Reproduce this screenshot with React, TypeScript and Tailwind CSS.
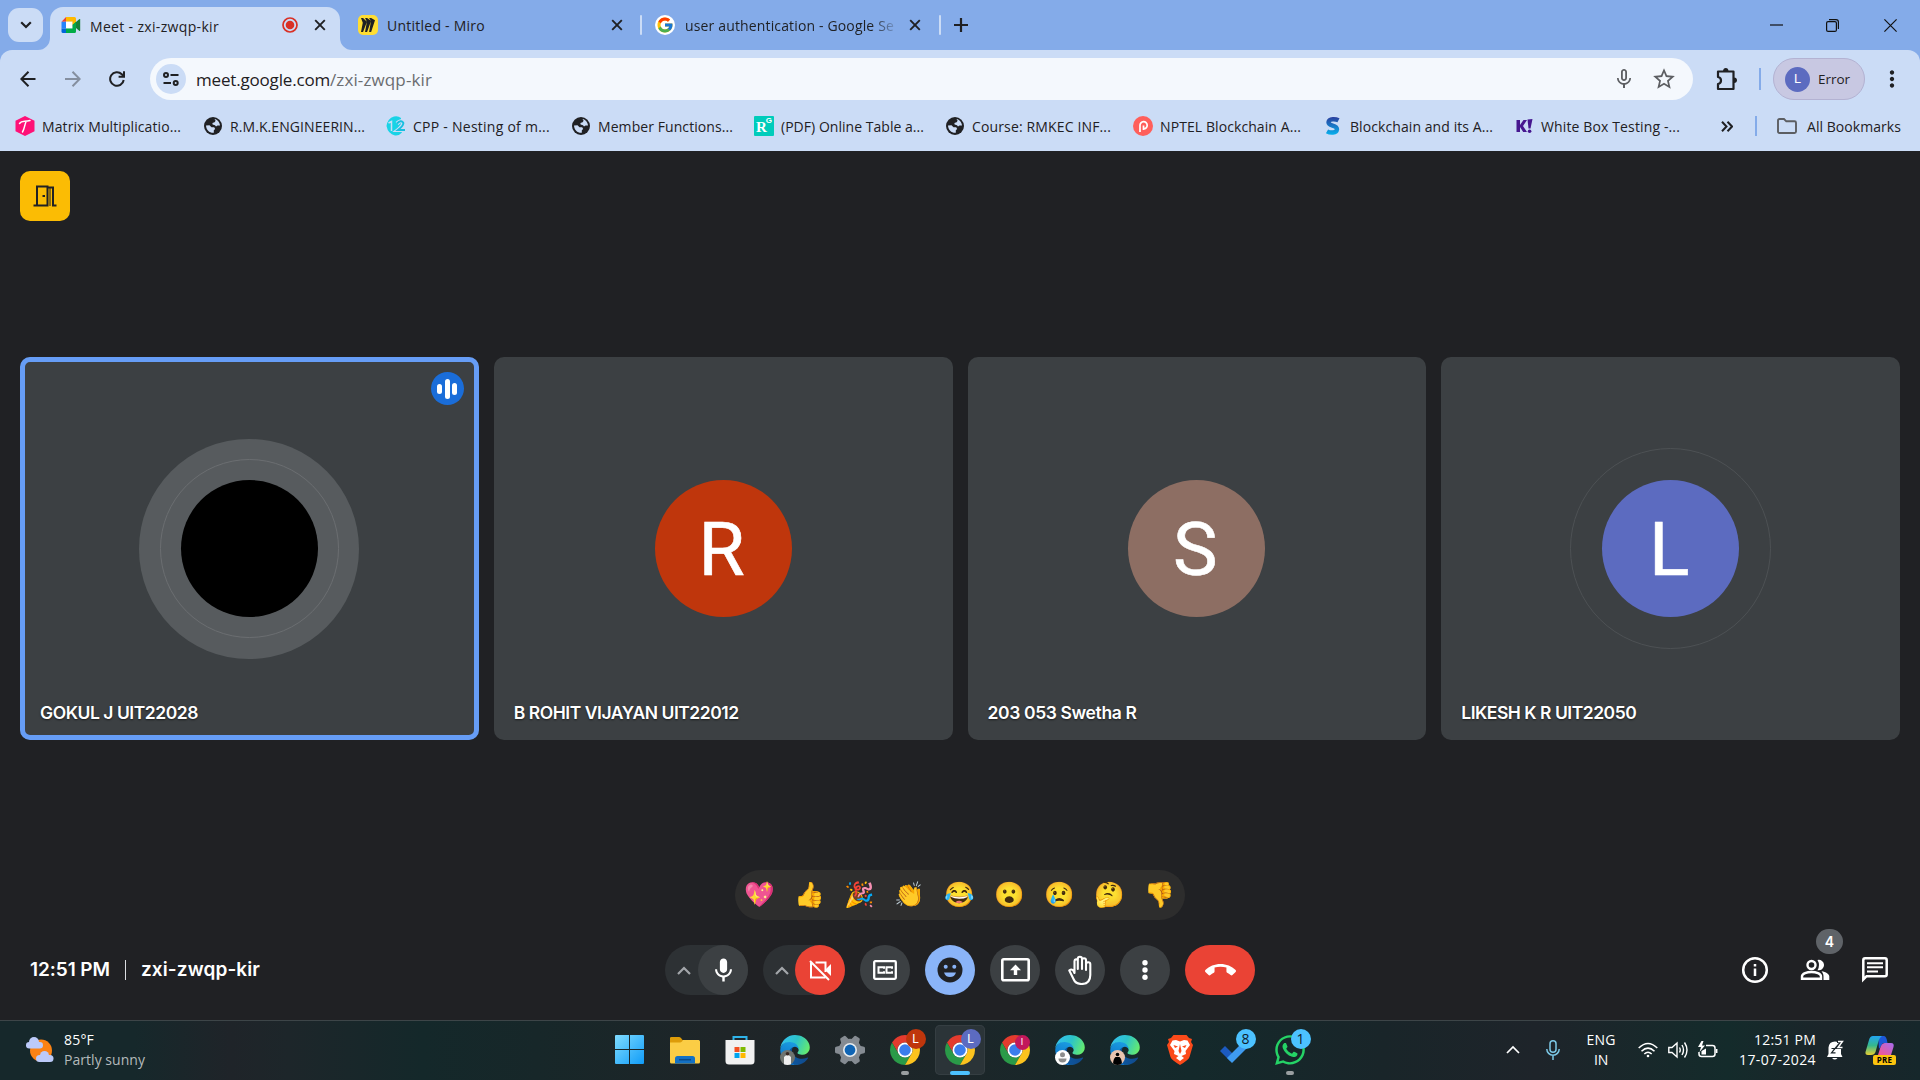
import React, { useLayoutEffect, useRef, useState } from 'react';
import { MdMic, MdMicNone, MdMoreVert, MdCallEnd, MdStarBorder } from 'react-icons/md';
import { FcGoogle } from 'react-icons/fc';
import { SiMiro } from 'react-icons/si';
import { FaWhatsapp } from 'react-icons/fa';

/* Text that spreads its tracking so that it fills a given width. */
function Fit({ w, className = '', children }: { w: number; className?: string; children: string }) {
  const ref = useRef<HTMLSpanElement>(null);
  const [ls, setLs] = useState(0);
  useLayoutEffect(() => {
    if (ref.current) setLs((w - ref.current.getBoundingClientRect().width) / children.length);
  }, [w, children]);
  return (
    <span ref={ref} className={'inline-block whitespace-nowrap ' + className} style={{ letterSpacing: ls }}>
      {children}
    </span>
  );
}

const Cross = ({ className = '' }: { className?: string }) => (
  <svg viewBox="0 0 12 12" className={'h-3 w-3 shrink-0 ' + className} fill="none" stroke="#1f2023" strokeWidth="1.9">
    <path d="M1.2 1.2 10.8 10.8M10.8 1.2 1.2 10.8" />
  </svg>
);

const MeetLogo = () => (
  <svg viewBox="0 0 20 16" className="h-4 w-5">
    <path d="M4.500 4.500H11.500V11.500H4.500Z" fill="#fff" />
    <path d="M.5 4.800 5 0V4.800Z" fill="#ea4335" />
    <path d="M5 0H13.500Q15 0 15 1.500V6L11.500 8V4.500H5Z" fill="#ffba00" />
    <path d="M.5 4.800H5V11.500H.5Z" fill="#2684fc" />
    <path d="M.5 11.500H5V16H2Q.5 16 .5 14.500Z" fill="#0066da" />
    <path d="M5 11.500H11.500V8L15 10.500V14.500Q15 16 13.500 16H5Z" fill="#00ac47" />
    <path d="M11.500 8 18.200 2.200Q19.200 1.600 19.200 2.600V13.400Q19.200 14.400 18.200 13.800Z" fill="#188038" />
    <path d="M11.500 8 15 5V11Z" fill="#00ac47" />
  </svg>
);

const Globe = () => (
  <svg viewBox="0 0 20 20" className="h-5 w-5">
    <circle cx="10" cy="10" r="9" fill="#202124" />
    <path d="M11.500 3.100C14.500 3.800 16.800 6.400 17 9.600L14.500 9.400 13 10.600 12 9.200 9.600 8.600 9.400 7 11.600 6.300 12.600 4.800Z" fill="#cbdcf6" />
    <path d="M3 9.500 6.500 9.300 8.500 11.300H11.200L12.200 13 10.800 14.200V16.800C6.700 17.200 3.200 14 3 9.500Z" fill="#cbdcf6" />
  </svg>
);

const Hexagon = () => (
  <svg viewBox="0 0 20 20" className="h-5 w-5">
    <path d="M10 0 19.500 4.800V15.200L10 20 .5 15.200V4.800Z" fill="#ff1177" />
    <path d="M4.500 7.500C6.500 4.500 9 6 15 4.600M11 5.700C9.500 9 9.500 13 7.500 16" stroke="#fff" strokeWidth="1.500" fill="none" strokeLinecap="round" />
  </svg>
);

const Twelve = () => (
  <svg viewBox="0 0 20 20" className="h-5 w-5">
    <path d="M8 .5Q12-.5 15 2V8L12 12 16 16.500Q13 20 9 19.500Q2 18 .5 10Q1.500 2.500 8 .5Z" fill="#19d3e6" />
    <path d="M2.500 7 5.500 5.500V15" stroke="#cbdcf6" strokeWidth="1.500" fill="none" />
    <path d="M11 7.500Q15 3.500 17.200 6.500Q18.300 9 12 14H19" stroke="#cbdcf6" strokeWidth="4" fill="none" />
    <path d="M11 7.500Q15 3.500 17.200 6.500Q18.300 9 12 14H19" stroke="#19bfe0" strokeWidth="2" fill="none" />
  </svg>
);

const Gate = () => (
  <span className="relative block h-5 w-5 rounded-[1px] bg-[#00ccbb] font-['Liberation_Serif',serif] font-bold leading-none text-white">
    <span className="absolute left-[2px] top-[4px] text-[15px]">R</span>
    <span className="absolute right-[2px] top-[1px] font-['Liberation_Sans',sans-serif] text-[8px]">G</span>
  </span>
);

const Prutor = () => (
  <svg viewBox="0 0 20 20" className="h-5 w-5">
    <circle cx="10" cy="10" r="10" fill="#ff5f5b" />
    <path d="M7 16V9.500a3.600 3.600 0 1 1 3.600 3.400M10.500 9.500V14" stroke="#fff" strokeWidth="1.700" fill="none" />
  </svg>
);

const SLetter = () => (
  <svg viewBox="0 0 20 20" className="h-5 w-5">
    <defs>
      <linearGradient id="sg" gradientUnits="userSpaceOnUse" x1="0" y1="1" x2="0" y2="19">
        <stop offset="0" stopColor="#2b3f9e" />
        <stop offset="1" stopColor="#06b2ee" />
      </linearGradient>
    </defs>
    <path d="M15.500 4.300C13 3 6 2 5.500 6.300 5.500 10.500 14 8.500 14 13.200 13.500 17.500 7 17 4 15.300" stroke="url(#sg)" strokeWidth="4.400" fill="none" />
  </svg>
);

const Kahoot = () => (
  <svg viewBox="0 0 20 20" className="h-5 w-5" fill="#46178f">
    <path d="M2.500 4H6V9L9.500 4H13L9 10 13 16H9.200L6 11V16H2.500Z" />
    <path d="M13.500 3.500 18.500 3 16.500 12.500H14.500Z" />
    <circle cx="15.600" cy="15.300" r="1.800" />
  </svg>
);

const bookmarks = [
  { icon: <Hexagon />, label: 'Matrix Multiplicatio...', w: 139, box: 'w-[188px]' },
  { icon: <Globe />, label: 'R.M.K.ENGINEERIN...', w: 135, box: 'w-[183px]' },
  { icon: <Twelve />, label: 'CPP - Nesting of m...', w: 137, box: 'w-[185px]' },
  { icon: <Globe />, label: 'Member Functions...', w: 135, box: 'w-[183px]' },
  { icon: <Gate />, label: '(PDF) Online Table a...', w: 143, box: 'w-[191px]' },
  { icon: <Globe />, label: 'Course: RMKEC INF...', w: 139, box: 'w-[188px]' },
  { icon: <Prutor />, label: 'NPTEL Blockchain A...', w: 141, box: 'w-[190px]' },
  { icon: <SLetter />, label: 'Blockchain and its A...', w: 143, box: 'w-[191px]' },
  { icon: <Kahoot />, label: 'White Box Testing -...', w: 139, box: 'w-[203px]' },
];

function TabStrip() {
  return (
    <div className="flex h-[50px] bg-[#84abe9] pl-2 text-[14px] text-[#1f2023]">
      <div className="mt-2 flex h-[34px] w-[35px] items-center justify-center rounded-[11px] bg-[#cbdcf6]">
        <svg viewBox="0 0 12 8" className="h-2 w-3" fill="none" stroke="#1f2023" strokeWidth="2.200"><path d="M1.200 1.200 6 6 10.800 1.200" /></svg>
      </div>
      <div className="relative ml-[7px] mt-[7px] flex h-[43px] w-[290px] items-center rounded-t-[13px] bg-[#cbdcf6] pb-[7px] pl-[11px]">
        <svg viewBox="0 0 12 12" className="absolute -left-3 bottom-0 h-3 w-3" fill="#cbdcf6"><path d="M12 0V12H0A12 12 0 0 0 12 0Z" /></svg>
        <svg viewBox="0 0 12 12" className="absolute -right-3 bottom-0 h-3 w-3" fill="#cbdcf6"><path d="M0 0V12H12A12 12 0 0 1 0 0Z" /></svg>
        <MeetLogo />
        <div className="ml-[9px] w-[192px] pt-[2px]"><Fit w={129}>Meet - zxi-zwqp-kir</Fit></div>
        <svg viewBox="0 0 16 16" className="h-4 w-4"><circle cx="8" cy="8" r="7" fill="none" stroke="#d93025" strokeWidth="1.700" /><circle cx="8" cy="8" r="4.300" fill="#d93025" /></svg>
        <Cross className="ml-4" />
      </div>
      <div className="ml-[18px] flex w-[284px] items-center">
        <span className="flex h-5 w-5 items-center justify-center rounded-[5px] bg-[#ffdd33]"><SiMiro className="h-[14px] w-[14px]" /></span>
        <div className="ml-[9px] w-[224px] pt-px"><Fit w={98}>Untitled - Miro</Fit></div>
        <Cross />
        <span className="ml-auto h-5 w-[2px] rounded bg-[#cbdcf6]" />
      </div>
      <div className="ml-[13px] flex w-[286px] items-center">
        <span className="flex h-5 w-5 items-center justify-center rounded-full bg-white"><FcGoogle className="h-[18px] w-[18px]" /></span>
        <div className="ml-[10px] w-[212px] whitespace-nowrap pt-px [mask-image:linear-gradient(to_right,#000_88%,rgba(0,0,0,0.15)_99%)]"><Fit w={209}>user authentication - Google Se</Fit></div>
        <Cross className="ml-[12px]" />
        <span className="ml-auto h-5 w-[2px] rounded bg-[#cbdcf6]" />
      </div>
      <div className="ml-[13px] flex items-center">
        <svg viewBox="0 0 14 14" className="h-[14px] w-[14px]" stroke="#1f2023" strokeWidth="2.200"><path d="M7 0V14M0 7H14" /></svg>
      </div>
      <div className="ml-auto flex items-center pr-[23px]">
        <svg viewBox="0 0 13 13" className="h-[13px] w-[13px]" stroke="#111" strokeWidth="1.200"><path d="M0 6H13" /></svg>
        <svg viewBox="0 0 13 13" className="ml-[43px] h-[13px] w-[13px]" stroke="#111" strokeWidth="1.200" fill="none"><rect x=".6" y="2.600" width="9.800" height="9.800" rx="1.500" /><path d="M3 .6H10Q12.400.6 12.400 3V10" /></svg>
        <svg viewBox="0 0 13 13" className="ml-[45px] h-[13px] w-[13px]" stroke="#111" strokeWidth="1.200"><path d="M.4.400 12.600 12.600M12.600.4.400 12.600" /></svg>
      </div>
    </div>
  );
}

function Toolbar() {
  return (
    <div className="bg-[#84abe9]">
      <div className="flex h-[101px] flex-col rounded-t-[12px] bg-[#cbdcf6] text-[#1f2023]">
        <div className="mt-2 flex h-[42px] items-center pl-5">
          <svg viewBox="0 0 16 16" className="h-4 w-4" fill="none" stroke="#1f2023" strokeWidth="2"><path d="M15.500 8H1.500M8.500.8 1.300 8 8.500 15.200" /></svg>
          <svg viewBox="0 0 16 16" className="ml-[29px] h-4 w-4" fill="none" stroke="#858f9f" strokeWidth="2"><path d="M0 8H14.500M7.500.8 14.700 8 7.500 15.200" /></svg>
          <svg viewBox="0 0 16 16" className="ml-[28px] h-4 w-4" fill="none" stroke="#1f2023" strokeWidth="2"><path d="M14.700 9A6.800 6.800 0 1 1 12.800 3.200L15 5.400M15 .3V5.700H9.600" /></svg>
          <div className="ml-[25px] flex h-[42px] w-[1543px] items-center rounded-full bg-[#f4f8fd] pl-[6px] pr-[16px]">
            <div className="flex h-[30px] w-[30px] items-center justify-center rounded-full bg-[#cbdcf6]">
              <svg viewBox="0 0 16 14" className="h-[14px] w-4" fill="none" stroke="#1f2023" strokeWidth="2"><circle cx="3" cy="3" r="2" /><path d="M7.500 3H15.500M.5 11H8" /><circle cx="12.700" cy="11" r="2" /></svg>
            </div>
            <span className="ml-[10px] flex pt-px text-[17px]"><Fit w={134}>meet.google.com</Fit><Fit w={102} className="text-[#6b6d70]">/zxi-zwqp-kir</Fit></span>
            <MdMicNone className="ml-auto h-[24px] w-[24px] text-[#5c5e62]" />
            <MdStarBorder className="ml-[15px] h-[26px] w-[26px] text-[#5c5e62]" />
          </div>
          <svg viewBox="0 0 24 26" className="ml-[22px] h-[26px] w-6" fill="none" stroke="#1f2023" strokeWidth="2.200" strokeLinejoin="round"><path d="M3 5.500H18.500V23H3V18Q6 17.500 6 14.500T3 11Z" /><path d="M8 5Q8.300 2 10.800 2T13.500 5ZM19 11.500Q22 11.800 22 14.200T19 17Z" fill="#1f2023" stroke="none" /></svg>
          <span className="ml-[20px] h-[22px] w-[2px] bg-[#84abe9]" />
          <div className="ml-[12px] flex h-[42px] w-[92px] items-center rounded-full border border-[#b3b2d2] bg-[#c8c8e2] pl-[11px] text-[13.500px]">
            <span className="flex h-[25px] w-[25px] items-center justify-center rounded-full bg-[#5c6bc0] font-['Roboto',sans-serif] text-[13px] text-white">L</span>
            <span className="ml-[8px]"><Fit w={32}>Error</Fit></span>
          </div>
          <MdMoreVert className="ml-[14px] h-[26px] w-[26px]" />
        </div>
        <div className="flex h-[50px] items-center pl-[15px] pt-[2px] text-[14px]">
          {bookmarks.map((b) => (
            <div key={b.label} className={'flex shrink-0 items-center ' + b.box}>
              {b.icon}
              <span className="ml-[7px]"><Fit w={b.w}>{b.label}</Fit></span>
            </div>
          ))}
          <svg viewBox="0 0 12 11" className="ml-[4px] h-[11px] w-3 shrink-0" fill="none" stroke="#1f2023" strokeWidth="2"><path d="M1 .8 5.500 5.500 1 10.200M6.500.8 11 5.500 6.500 10.200" /></svg>
          <span className="ml-[22px] h-5 w-[2px] shrink-0 bg-[#84abe9]" />
          <svg viewBox="0 0 20 16" className="ml-[20px] h-4 w-5 shrink-0" fill="none" stroke="#5c5e62" strokeWidth="1.900"><path d="M1 2.500Q1 1 2.500 1H7L9.300 3.300H17.500Q19 3.300 19 4.800V13.500Q19 15 17.500 15H2.500Q1 15 1 13.500Z" /></svg>
          <span className="ml-[10px]"><Fit w={94}>All Bookmarks</Fit></span>
        </div>
      </div>
    </div>
  );
}

type Person = { name: string; w: number; letter: string; color: string };
const people: Person[] = [
  { name: 'GOKUL J UIT22028', w: 158, letter: '', color: 'bg-black' },
  { name: 'B ROHIT VIJAYAN UIT22012', w: 225, letter: 'R', color: 'bg-[#bf360c]' },
  { name: '203 053 Swetha R', w: 149, letter: 'S', color: 'bg-[#8d6e63]' },
  { name: 'LIKESH K R UIT22050', w: 175, letter: 'L', color: 'bg-[#5c6bc0]' },
];

function Tile({ p, i }: { p: Person; i: number }) {
  return (
    <div className="relative flex h-[383px] items-center justify-center rounded-[10px] bg-[#3c4043]">
      {i === 0 && (
        <>
          <div className="absolute inset-0 rounded-[10px] border-[5px] border-[#669df6]" />
          <div className="absolute right-[15px] top-[15px] flex h-[33px] w-[33px] items-center justify-center gap-[2.500px] rounded-full bg-[#1a6dd9]">
            <span className="h-[10px] w-[5px] rounded-full bg-white" />
            <span className="h-[20px] w-[5px] rounded-full bg-white" />
            <span className="h-[12px] w-[5px] rounded-full bg-white" />
          </div>
          <div className="absolute h-[220px] w-[220px] rounded-full bg-[#575b5e]" />
          <div className="absolute h-[179px] w-[179px] rounded-full border border-[#6b6e71]" />
        </>
      )}
      {i === 3 && <div className="absolute h-[201px] w-[201px] rounded-full border border-[#4d5154]" />}
      <div className={"relative flex h-[137px] w-[137px] items-center justify-center rounded-full pr-[3px] pt-[2px] font-['Roboto',sans-serif] text-[75px] leading-none text-white [-webkit-text-stroke:0.6px_white] " + p.color}>{p.letter}</div>
      <div className="absolute bottom-[15px] left-5 font-['Inter',sans-serif] text-[17.500px] font-semibold leading-6 text-white [text-shadow:0_1px_2px_rgba(0,0,0,.6)]"><Fit w={p.w}>{p.name}</Fit></div>
    </div>
  );
}

const Round = ({ children, className = 'bg-[#3c4043]' }: { children: React.ReactNode; className?: string }) => (
  <div className={'flex h-[50px] w-[50px] shrink-0 items-center justify-center rounded-full text-white ' + className}>{children}</div>
);

const Up = () => (
  <svg viewBox="0 0 14 9" className="ml-[12px] h-[9px] w-[14px]" fill="none" stroke="#a3a6aa" strokeWidth="2.200"><path d="M1 8 7 2 13 8" /></svg>
);

function Controls() {
  return (
    <div className="flex gap-[15px]">
      <div className="flex w-[83px] items-center justify-between rounded-full bg-[#2d3134]"><Up /><Round><MdMic className="h-[29px] w-[29px]" /></Round></div>
      <div className="flex w-[82px] items-center justify-between rounded-full bg-[#2d3134]"><Up />
        <Round className="bg-[#ea4335]">
          <svg viewBox="0 0 24 24" className="h-6 w-6" fill="none" stroke="#fff" strokeWidth="2"><path d="M3 4.500V19.500H17.500M7.500 4.500H17.500V14" /><path d="M17.500 11.500 23 6V18L17.500 12.500Z" fill="#fff" stroke="none" /><path d="M2 3 21 22" /></svg>
        </Round>
      </div>
      <Round>
        <svg viewBox="0 0 24 20" className="h-5 w-6" fill="none" stroke="#fff" strokeWidth="2.300"><rect x="1.200" y="1.200" width="21.600" height="17.600" rx="1" /><path d="M11 8.700V7.300H5.500V12.700H11V11.300M19 8.700V7.300H13.500V12.700H19V11.300" strokeWidth="2" /></svg>
      </Round>
      <Round className="bg-[#8ab4f8]">
        <svg viewBox="0 0 26 26" className="h-[26px] w-[26px]"><circle cx="13" cy="13" r="12.500" fill="#202124" /><circle cx="8.700" cy="9.800" r="2" fill="#8ab4f8" /><circle cx="17.300" cy="9.800" r="2" fill="#8ab4f8" /><path d="M7 15.500H19Q17.500 20 13 20Q8.500 20 7 15.500Z" fill="#8ab4f8" /></svg>
      </Round>
      <Round>
        <svg viewBox="0 0 29 24" className="h-6 w-[29px]"><rect x="1.300" y="1.300" width="26.400" height="21" rx="1.500" fill="none" stroke="#fff" strokeWidth="2.600" /><path d="M14.500 6.500 20 12.200H16.200V17H12.800V12.200H9Z" fill="#fff" /></svg>
      </Round>
      <Round>
        <svg viewBox="0 0 24 30" className="h-[30px] w-6" fill="none" stroke="#fff" strokeWidth="2.100" strokeLinecap="round" strokeLinejoin="round"><path d="M9.800 14V3.800A2 2 0 0 1 14 3.800V14M14 5.300A2 2 0 0 1 18 5.300V15M18 9.300A2.100 2.100 0 0 1 22.300 9.500V20Q22.300 29 13.500 29Q7.500 29 5.500 24L1.300 15.500Q2.800 13.500 5.200 15.300L6.500 18V6A1.700 1.700 0 0 1 9.800 5.500" /></svg>
      </Round>
      <Round>
        <svg viewBox="0 0 6 20" className="h-5 w-[6px]" fill="#fff"><circle cx="3" cy="2.700" r="2.700" /><circle cx="3" cy="10" r="2.700" /><circle cx="3" cy="17.300" r="2.700" /></svg>
      </Round>
      <div className="flex h-[50px] w-[70px] items-center justify-center rounded-full bg-[#ea4335] text-white"><MdCallEnd className="h-[31px] w-[31px]" /></div>
    </div>
  );
}

const emojis = ['💖', '👍', '🎉', '👏', '😂', '😮', '😢', '🤔', '👎'];

function Meeting() {
  return (
    <div className="flex h-[869px] flex-col bg-[#202124]">
      <div className="ml-5 mt-5 flex h-[50px] w-[50px] items-center justify-center rounded-[10px] bg-[#fbbc04]">
        <svg viewBox="0 0 24 22" className="h-[22px] w-6" fill="none" stroke="#202124" strokeWidth="2"><path d="M.5 20.500H14.500V1.500H4V20.500M14.500 2.500H20V20.500H23.500" /><path d="M17 3V21" strokeWidth="1" /><rect x="9.500" y="10" width="2.500" height="2" fill="#202124" stroke="none" /></svg>
      </div>
      <div className="mt-[136px] grid grid-cols-4 gap-[15px] px-5">
        {people.map((p, i) => <Tile key={p.name} p={p} i={i} />)}
      </div>
      <div className="mt-[130px] flex h-[50px] w-[450px] items-center self-center rounded-full bg-[#2d2d2d]">
        {emojis.map((e) => <span key={e} className="w-[50px] text-center font-['Noto_Color_Emoji',sans-serif] text-[24.500px] leading-none">{e}</span>)}
      </div>
      <div className="mt-[25px] flex h-[50px] items-center justify-between">
        <div className="flex w-[665px] items-center pl-[30px] font-['Inter',sans-serif] text-[19px] font-semibold text-white">
          <Fit w={80}>12:51 PM</Fit>
          <span className="ml-[15px] mr-[15px] h-5 w-px bg-[#dadce0]" />
          <Fit w={119}>zxi-zwqp-kir</Fit>
        </div>
        <Controls />
        <div className="relative flex w-[665px] items-center justify-end gap-[30px] pr-[30px]">
          <svg viewBox="0 0 30 30" className="h-[30px] w-[30px]" fill="none" stroke="#fff" strokeWidth="2.500"><circle cx="15" cy="15" r="11.800" /><path d="M15 13.500V21M15 9V11.500" /></svg>
          <svg viewBox="0 0 30 30" className="h-[30px] w-[30px]" fill="#fff"><circle cx="11.500" cy="10" r="4" fill="none" stroke="#fff" strokeWidth="2.400" /><path d="M2 23.800V21.500C2 18.500 7 17 11.500 17S21 18.500 21 21.500V23.800Z" fill="none" stroke="#fff" strokeWidth="2.400" /><path d="M17.500 4.900A5.300 5.300 0 1 1 17.500 15.200Q20.500 10 17.500 4.900ZM21.500 16.200C26 17 29.300 18.800 29.300 21.500V25H23.500V21.500C23.500 19 22.500 17.500 21.500 16.200Z" /></svg>
          <svg viewBox="0 0 30 30" className="h-[30px] w-[30px]" fill="none" stroke="#fff" strokeWidth="2.500"><path d="M3.300 24.500V5Q3.300 3.300 5 3.300H25Q26.700 3.300 26.700 5V19.500Q26.700 21.200 25 21.200H6.600L3.300 24.500Z" /><path d="M7 8.300H23M7 12.300H23M7 16.400H18" strokeWidth="2" /></svg>
          <span className="absolute right-[77px] top-[-26px] flex h-[25px] w-[27px] items-center justify-center rounded-full bg-[#5f6368] font-['Inter',sans-serif] text-[14px] font-semibold text-white">4</span>
        </div>
      </div>
    </div>
  );
}

const Chrome = () => (
  <svg viewBox="2 2 44 44" className="h-[30px] w-[30px]">
    <path d="M43.050 13H24A11 11 0 0 0 14.470 29.500L4.950 13A22 22 0 0 1 43.050 13Z" fill="#e33b2e" />
    <path d="M4.950 13 14.470 29.500A11 11 0 0 0 33.530 29.500L24 46A22 22 0 0 1 4.950 13Z" fill="#2a9a48" />
    <path d="M24 46 33.530 29.500A11 11 0 0 0 24 13H43.050A22 22 0 0 1 24 46Z" fill="#fcc31e" />
    <circle cx="24" cy="24" r="11" fill="#fff" /><circle cx="24" cy="24" r="8.500" fill="#3b7ded" />
  </svg>
);

const Edge = ({ id }: { id: string }) => (
  <svg viewBox="0 0 256 260" className="h-[30px] w-[30px]">
    <defs>
      <linearGradient id={id + 'a'} x1="0" x2="1"><stop offset="0" stopColor="#0c59a4" /><stop offset="1" stopColor="#114a8b" /></linearGradient>
      <linearGradient id={id + 'b'} x1="0.600" x2="0.300" y1="0" y2="1"><stop offset="0" stopColor="#1b9de2" /><stop offset="1" stopColor="#0a6cc4" /></linearGradient>
      <linearGradient id={id + 'c'} x1="0" x2="1" y1="0.300" y2="0.600"><stop offset="0" stopColor="#35c1f1" /><stop offset="0.500" stopColor="#2cc3c9" /><stop offset="1" stopColor="#66eb6e" /></linearGradient>
    </defs>
    <path fill={`url(#${id}a)`} d="M235.680 195.460a93.730 93.730 0 0 1-10.540 4.710 101.870 101.870 0 0 1-35.900 6.460c-47.320 0-88.540-32.550-88.540-74.320A31.480 31.480 0 0 1 117.130 105c-42.800 1.800-53.800 46.400-53.800 72.530 0 73.880 68.090 81.370 82.760 81.370 7.910 0 19.840-2.300 27-4.560l1.310-.44a128.340 128.340 0 0 0 66.600-52.800 4 4 0 0 0-5.320-5.640z" />
    <path fill={`url(#${id}b)`} d="M105.730 246.420A79.200 79.200 0 0 1 83 225.080a80.720 80.720 0 0 1 29.530-120c3.120-1.470 8.450-4.130 15.540-4a32.350 32.350 0 0 1 25.690 13 31.880 31.880 0 0 1 6.360 18.660c0-.21 24.460-79.600-80-79.600-43.900 0-80 41.660-80 78.210a130.150 130.150 0 0 0 12.110 56 128 128 0 0 0 156.380 67.110 75.550 75.550 0 0 1-62.780-8z" />
    <path fill={`url(#${id}c)`} d="M152.330 148.860c-.81 1.050-3.300 2.500-3.300 5.660 0 2.610 1.700 5.120 4.720 7.230 14.380 10 41.490 8.680 41.560 8.680a59.560 59.560 0 0 0 30.270-8.350A61.380 61.380 0 0 0 256 109.200c.26-22.410-8-37.310-11.340-43.910C223.460 23.840 177.720 0 128 0A128 128 0 0 0 0 126.200c.48-36.540 36.800-66.050 80-66.050 3.500 0 23.460.34 42 10.070 16.340 8.580 24.900 18.940 30.850 29.210 6.180 10.670 7.280 24.150 7.280 29.520s-2.740 13.330-7.800 19.910z" />
  </svg>
);

const Gear = () => (
  <svg viewBox="0 0 30 30" className="h-[30px] w-[30px]">
    <g fill="#858b92">
      <circle cx="15" cy="15" r="11.300" />
      {[30, 90, 150, 210, 270, 330].map((a) => <path key={a} d="M10.500 6 11.800 1Q12 0 13.200 0H16.800Q18 0 18.200 1L19.500 6Z" transform={`rotate(${a} 15 15)`} />)}
    </g>
    <circle cx="15" cy="15" r="7" fill="#e8ecef" /><circle cx="15" cy="15" r="5.400" fill="#0f64b4" />
  </svg>
);

const Folder = () => (
  <svg viewBox="0 0 30 28" className="h-7 w-[30px]">
    <path d="M0 2Q0 1 1.500 1H9Q10 1 11 2L12.500 4H29V20H0Z" fill="#dd9c09" />
    <path d="M0 6.500H10Q11 6.500 12 5.500L13 4H28.500Q30 4 30 5.500V26Q30 27.500 28.500 27.500H1.500Q0 27.500 0 26Z" fill="#fbcd45" />
    <path d="M5 27.500V22.500Q5 20 7.500 20H22.500Q25 20 25 22.500V27.500Z" fill="#1471c4" /><path d="M9 23.700H21" stroke="#0a4a8a" strokeWidth="1.500" />
  </svg>
);

const Store = () => (
  <svg viewBox="0 0 30 30" className="h-[30px] w-[30px]">
    <path d="M8.500 6V2H21.500V6" fill="none" stroke="#2fb4ea" strokeWidth="2" />
    <path d="M.5 5H29.500V26Q29.500 29.500 26 29.500H4Q.5 29.500.5 26Z" fill="#f1f1f1" />
    <path d="M9.500 12H14.500V17H9.500Z" fill="#f25022" /><path d="M15.500 12H20.500V17H15.500Z" fill="#7fba00" /><path d="M9.500 18H14.500V23H9.500Z" fill="#00a4ef" /><path d="M15.500 18H20.500V23H15.500Z" fill="#ffb900" />
  </svg>
);

const Win = () => (
  <svg viewBox="0 0 29 29" className="h-[29px] w-[29px]">
    <defs><linearGradient id="wg" x1="0" y1="0" x2="1" y2="1"><stop offset="0" stopColor="#7fdcff" /><stop offset="1" stopColor="#109cf8" /></linearGradient></defs>
    <path d="M1 0H14V14H0V1Q0 0 1 0ZM15 0H28Q29 0 29 1V14H15ZM0 15H14V29H1Q0 29 0 28ZM15 15H29V28Q29 29 28 29H15Z" fill="url(#wg)" />
  </svg>
);

const Badge = ({ children, className }: { children: React.ReactNode; className: string }) => (
  <span className={'absolute flex items-center justify-center rounded-full leading-none ' + className}>{children}</span>
);

function DockItem({ children, on = false }: { children: React.ReactNode; on?: boolean }) {
  return (
    <div className="flex w-[55px] items-center justify-center">
      <div className={'relative flex h-[50px] w-[50px] items-center justify-center rounded-[5px] ' + (on ? 'bg-[#2b3438] ring-1 ring-inset ring-[#353e42]' : '')}>{children}</div>
    </div>
  );
}

function Taskbar() {
  return (
    <div className="flex h-[60px] items-center border-t border-[#3d4548] bg-[linear-gradient(90deg,#16282b_0%,#16282b_7%,#1f2429_12%,#1d262a_15%,#14282a_22%,#172729_28%,#1f2528_38%,#1c2629_50%,#14292b_62%,#192529_72%,#1e242a_80%,#142b2b_90%,#1b252a_95%,#16272b_100%)] pb-[2px] text-white">
      <div className="flex w-[602px] items-center pl-[26px]">
        <svg viewBox="0 0 28 28" className="h-7 w-7"><circle cx="15" cy="14.500" r="11" fill="#fb8214" /><g fill="#bccaf9"><circle cx="8" cy="6" r="5" /><rect y="6" width="17" height="6.500" rx="3.200" /><circle cx="18.500" cy="19.500" r="4.500" /><rect x="10" y="19" width="17.500" height="7" rx="3.500" /></g></svg>
        <div className="ml-[10px] text-[14px] leading-5"><div><Fit w={30}>85°F</Fit></div><div className="text-[#b4babb]"><Fit w={81}>Partly sunny</Fit></div></div>
      </div>
      <div className="flex">
        <DockItem><Win /></DockItem>
        <DockItem><Folder /></DockItem>
        <DockItem><Store /></DockItem>
        <DockItem><Edge id="e1" /><Badge className="bottom-[10px] left-[10px] h-[15px] w-[15px] overflow-hidden bg-[#6f7470]"><svg viewBox="0 0 15 15" className="h-full w-full"><path d="M4 15V7Q7.500 3 11 7V15Z" fill="#eee" /><circle cx="7.500" cy="3.800" r="1.800" fill="#3a2822" /></svg></Badge></DockItem>
        <DockItem><Gear /></DockItem>
        <DockItem><Chrome /><Badge className="right-[4px] top-[4px] h-5 w-5 bg-[#bf360c] font-['Roboto',sans-serif] text-[12px]">L</Badge><span className="absolute bottom-0 h-1 w-2 rounded-full bg-[#9a9fa1]" /></DockItem>
        <DockItem on><Chrome /><Badge className="right-[4px] top-[4px] h-5 w-5 bg-[#5c6bc0] font-['Roboto',sans-serif] text-[12px]">L</Badge><span className="absolute bottom-0 h-1 w-5 rounded-full bg-[#4cc2ff]" /></DockItem>
        <DockItem><Chrome /><Badge className="right-[10px] top-[10px] h-[15px] w-[15px] bg-[#c2185b] font-['Roboto',sans-serif] text-[9px]">I</Badge></DockItem>
        <DockItem><Edge id="e2" /><Badge className="bottom-[10px] left-[10px] h-[15px] w-[15px] bg-white"><svg viewBox="0 0 15 15" className="h-full w-full" fill="#8d8d8d"><circle cx="7.500" cy="4.800" r="2.500" /><path d="M3.500 8.500H11.500Q11.500 12.500 7.500 12.500T3.500 8.500Z" /></svg></Badge></DockItem>
        <DockItem><Edge id="e3" /><Badge className="bottom-[10px] left-[10px] h-[15px] w-[15px] overflow-hidden bg-[#e8c3ae]"><svg viewBox="0 0 15 15" className="h-full w-full"><circle cx="7.500" cy="4.500" r="1.800" /><path d="M3 15Q3 9 5.500 7H9.500Q12 9 12 15Z" /></svg></Badge></DockItem>
        <DockItem>
          <svg viewBox="0 0 26 30" className="h-[30px] w-[26px]"><path d="M6.500 0H19.500L22 3 25 4 24 7 26 10 22.500 22Q21.500 25 13 30Q4.500 25 3.500 22L0 10 2 7 1 4 4 3Z" fill="#fb4a1a" /><path d="M9 5 13 6.500 17 5 20.500 5.500 23 10 18.500 16 19 19 14.500 21 17 23 13 26 9 23 11.500 21 7 19 7.500 16 3 10 5.500 5.500Z" fill="#fff" /><path d="M13 9 14.500 16 13 19 11.500 16ZM6.500 10 11 11.500 8 13ZM19.500 10 15 11.500 18 13Z" fill="#fb4a1a" /></svg>
        </DockItem>
        <DockItem>
          <svg viewBox="0 0 30 24" className="absolute left-[10px] top-[14px] h-6 w-[30px]"><path d="M0 12 5 7 15 17 10 22Z" fill="#1c5ac0" /><path d="M7 19 23 3 28 8 12 24Z" fill="#3f9bf0" /></svg>
          <Badge className="right-[4px] top-[4px] h-5 w-5 bg-[#4cc2ff] text-[14px] text-[#10202a]">8</Badge>
        </DockItem>
        <DockItem><FaWhatsapp className="h-[34px] w-[34px] text-[#25d366]" /><Badge className="right-[4px] top-[4px] h-5 w-5 bg-[#4cc2ff] text-[14px] text-[#10202a]">1</Badge><span className="absolute bottom-0 h-1 w-2 rounded-full bg-[#9a9fa1]" /></DockItem>
      </div>
      <div className="ml-auto flex items-center pr-[24px] text-[14px] leading-5">
        <svg viewBox="0 0 14 9" className="h-[9px] w-[14px]" fill="none" stroke="#fff" strokeWidth="1.700"><path d="M1 8 7 2 13 8" /></svg>
        <svg viewBox="0 0 14 20" className="ml-[26px] h-5 w-[14px]" fill="none" stroke="#7cc8e6" strokeWidth="1.500"><rect x="4" y=".8" width="6" height="11.500" rx="3" /><path d="M.8 9A6.200 6.200 0 0 0 13.200 9M7 15.200V20" /></svg>
        <div className="ml-[26px] flex w-[30px] flex-col items-center"><Fit w={29}>ENG</Fit><Fit w={14}>IN</Fit></div>
        <svg viewBox="0 0 20 16" className="ml-[22px] h-4 w-5" fill="none" stroke="#fff" strokeWidth="1.500"><path d="M.7 6Q10-3 19.300 6M3.500 9.200Q10 3 16.500 9.200M6.300 12Q10 8.500 13.700 12" /><circle cx="10" cy="14" r="1.300" fill="#fff" stroke="none" /></svg>
        <svg viewBox="0 0 20 18" className="ml-[10px] h-[18px] w-5" fill="none" stroke="#fff" strokeWidth="1.400"><path d="M.8 6.500H4L9 2V16L4 11.500H.8ZM11.500 6.500Q13 9 11.500 11.500M14 4Q17 9 14 14M16.500 1.500Q21.500 9 16.500 16.500" /></svg>
        <svg viewBox="0 0 20 18" className="ml-[10px] h-[18px] w-5" fill="none" stroke="#fff" strokeWidth="1.500"><path d="M8 4.500H14.500Q17 4.500 17 7V13Q17 15.500 14.500 15.500H3.500Q1 15.500 1 13V11M18.700 8V12" /><path d="M3.500 0 0 6H3L1.500 11 7 4.500H4L5.500 0ZM3.500 13.500V10L8 7.500V13.500Z" fill="#fff" stroke="none" /></svg>
        <div className="ml-[20px] flex w-[78px] flex-col items-end"><Fit w={62}>12:51 PM</Fit><Fit w={77}>17-07-2024</Fit></div>
        <svg viewBox="0 0 18 20" className="ml-[10px] h-5 w-[18px]"><path d="M1 17 2.500 14V7.500Q3 1.500 9 1.500T15 7.500V14L16.500 17ZM6 18H11.500Q8.800 21 6 18Z" fill="#fff" /><path d="M5.500 8.500H9L5.500 12.800H9.500" stroke="#1b252a" strokeWidth="1.200" fill="none" /><path d="M11 1.500H16L11 7.500H16" stroke="#1b252a" strokeWidth="3" fill="none" /><path d="M12 1.500H16.500L12 7.500H16.500" stroke="#fff" strokeWidth="1.400" fill="none" /></svg>
        <div className="relative ml-[21px] h-[30px] w-[31px]">
          <svg viewBox="0 0 30 30" className="h-[30px] w-[30px]">
            <defs>
              <linearGradient id="cp1" x1="0" y1="0" x2="0" y2="1"><stop offset="0" stopColor="#22a6f2" /><stop offset=".5" stopColor="#35b88d" /><stop offset="1" stopColor="#e8cf32" /></linearGradient>
              <linearGradient id="cp2" x1="1" y1="0" x2="0" y2="1"><stop offset="0" stopColor="#a66cf0" /><stop offset="1" stopColor="#f7568c" /></linearGradient>
            </defs>
            <path d="M13 1H19Q21.500 1 22.500 8H18L14 14Z" fill="#1c58d8" />
            <path d="M8 1H17Q14 3 13 8L10.500 17Q9.500 20 6 20H3Q0 20 .5 17L4 5Q5 1 8 1Z" fill="url(#cp1)" />
            <path d="M20 8H26Q29.500 8 28.500 12L26 20H13L15.500 12Q17 8 20 8Z" fill="url(#cp2)" />
          </svg>
          <span className="absolute bottom-0 right-0 flex h-[10px] w-[23px] items-center justify-center rounded-[2px] bg-[#fbc30e] text-[8px] font-bold leading-none tracking-wide text-black">PRE</span>
        </div>
      </div>
    </div>
  );
}

export default function App() {
  return (
    <div className="flex h-[1080px] w-[1920px] flex-col overflow-hidden bg-[#202124] font-['Open_Sans','Noto_Sans',sans-serif]">
      <TabStrip />
      <Toolbar />
      <Meeting />
      <Taskbar />
    </div>
  );
}
